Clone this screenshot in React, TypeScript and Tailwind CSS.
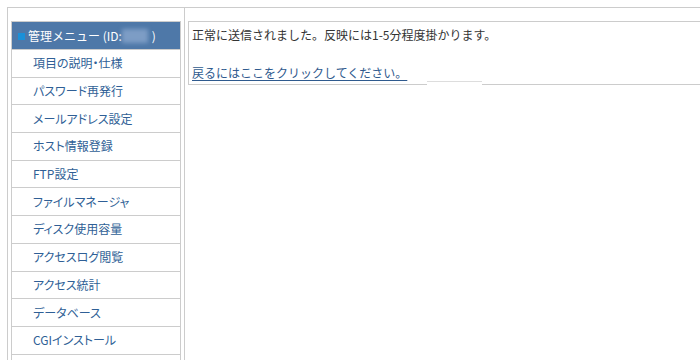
const menuItems = [
  "項目の説明・仕様",
  "パスワード再発行",
  "メールアドレス設定",
  "ホスト情報登録",
  "FTP設定",
  "ファイルマネージャ",
  "ディスク使用容量",
  "アクセスログ閲覧",
  "アクセス統計",
  "データベース",
  "CGIインストール",
  "",
];

export default function App() {
  return (
    <div className="w-[700px] h-[360px] overflow-hidden bg-white text-[12px] font-['Noto_Sans_CJK_JP','Noto_Sans',sans-serif]">
      <div className="ml-[7px] mt-[7px] w-[820px] h-[400px] flex border-l border-t border-[#cccccc]">
        {/* Left menu */}
        <div className="w-[177px] shrink-0 border-r border-[#cccccc] pl-[3px] pt-[13px]">
          <div className="w-[170px] border-x border-t border-[#cccccc]">
            <div className="h-[28px] flex items-center bg-[#4e78a8] border-b border-[#cccccc] pl-[6px] text-white">
              <span className="w-[7px] h-[7px] bg-[#1a90d8] mr-[3px] mt-[1px]" />
              <span>管理メニュー (ID:</span>
              <span className="inline-block w-[26px] h-[14px] bg-[#7d9dc5] blur-[2px]" />
              <span className="ml-[4px]">)</span>
            </div>
            {menuItems.map((item, i) => (
              <div
                key={i}
                className="h-[27.7px] flex items-center border-b border-[#cccccc] pl-[21px] text-[#2f5f96] [font-feature-settings:'palt']"
              >
                {item}
              </div>
            ))}
          </div>
        </div>

        {/* Content */}
        <div className="flex-1 pl-[3px] pt-[13px]">
          <div className="relative border border-[#cccccc] pl-[3px] pt-[3px] pb-[2px] leading-[19px] text-[#333333]">
            <p>正常に送信されました。反映には1-5分程度掛かります。</p>
            <br />
            <a href="#" className="text-[#2f5a8e] underline underline-offset-2">
              戻るにはここをクリックしてください。
            </a>
            <span className="absolute left-[238px] bottom-[-1px] w-[55px] h-[1px] bg-white" />
            <span className="absolute left-[238px] bottom-[2px] w-[55px] h-[1px] bg-[#dddddd]" />
          </div>
        </div>
      </div>
    </div>
  );
}
